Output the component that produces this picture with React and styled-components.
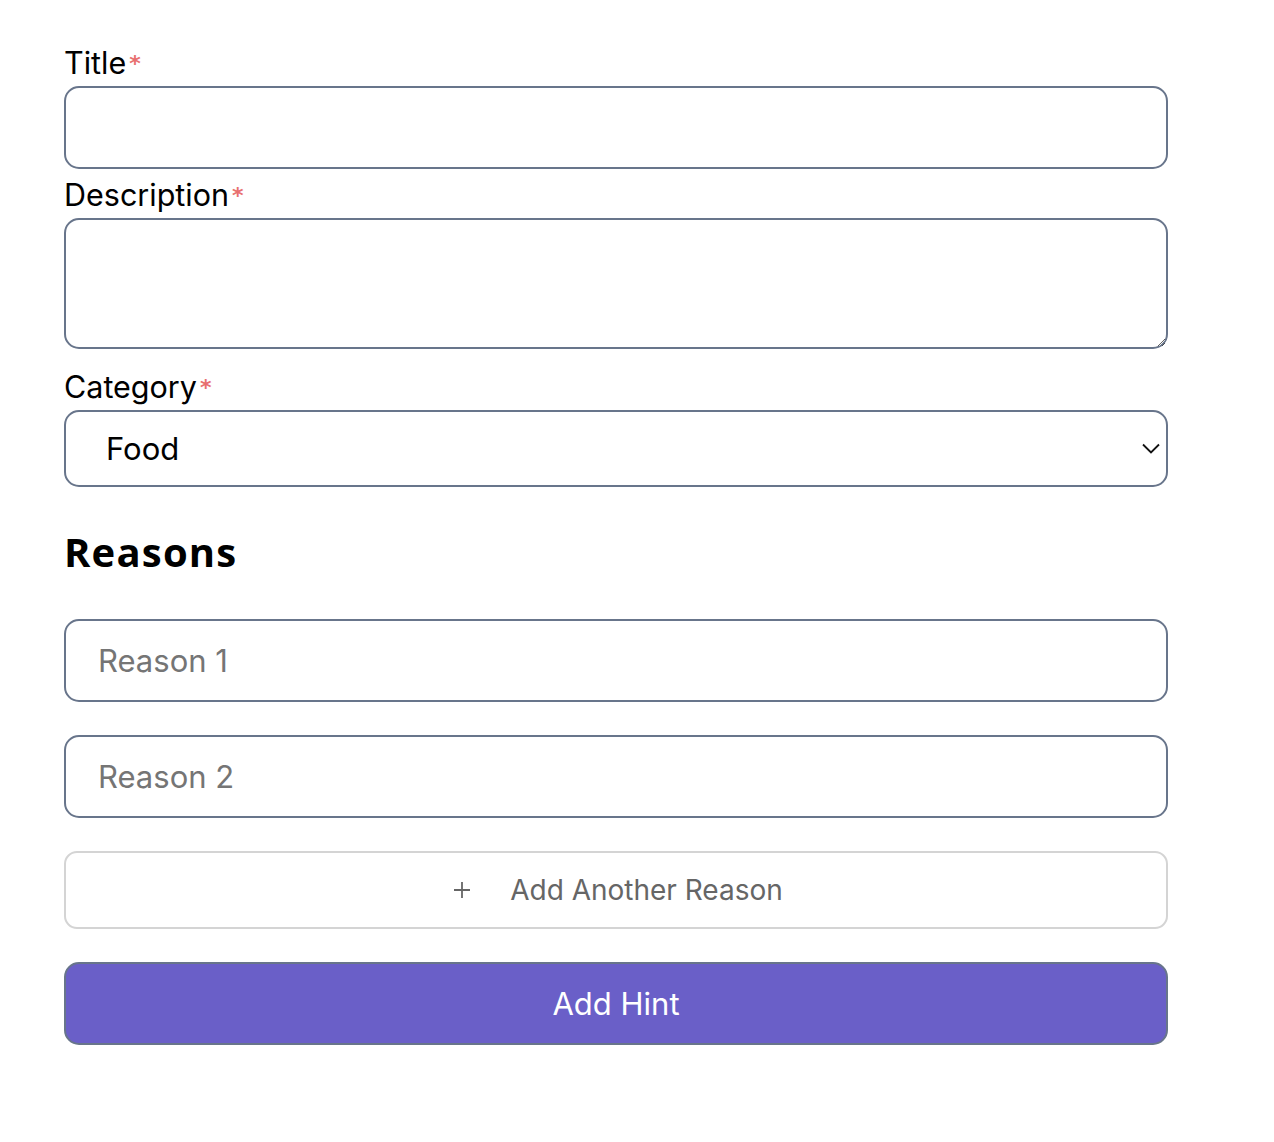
import React from "react";
import styled, { createGlobalStyle } from "styled-components";

const Global = createGlobalStyle`
  html, body { margin: 0; padding: 0; background: #fff; }
  body { font-family: Inter, "Liberation Sans", sans-serif; color: #000; }
  * { box-sizing: border-box; }
`;

const Page = styled.div`
  padding: 45px 0 60px 64px;
`;

const Form = styled.form`
  width: 1104px;
  display: flex;
  flex-direction: column;
`;

const Label = styled.label`
  display: flex;
  align-items: flex-start;
  font-size: 30.5px;
  line-height: 36px;
  height: 36px;
  margin: ${(p) => p.$top || 0}px 0 5px;
  color: #000;
`;

const Star = styled.span`
  color: #e87070;
  font-family: "DejaVu Sans", sans-serif;
  font-weight: 700;
  font-size: 22px;
  line-height: 22px;
  margin-left: 3px;
  margin-top: 8px;
`;

const fieldBase = `
  width: 100%;
  border: 2px solid #68758b;
  border-radius: 15px;
  background: #fff;
  font-family: Inter, "Liberation Sans", sans-serif;
  outline: none;
  display: block;
`;

const TextInput = styled.input`
  ${fieldBase}
  height: 83px;
  padding: 0 32px;
  font-size: 31px;
  color: #000;
  &::placeholder { color: #757575; }
`;

const TextArea = styled.textarea`
  ${fieldBase}
  height: 131px;
  padding: 16px 32px;
  font-size: 31px;
  resize: vertical;
`;

const SelectWrap = styled.div`
  position: relative;
  width: 100%;
`;

const Select = styled.select`
  ${fieldBase}
  appearance: none;
  height: 77px;
  padding: 0 60px 0 40px;
  font-size: 31px;
  color: #000;
`;

const Chevron = styled.svg`
  position: absolute;
  right: 7px;
  top: 31px;
  pointer-events: none;
`;

const Heading = styled.h2`
  font-family: "Open Sans", Lato, sans-serif;
  font-weight: 700;
  font-size: 40px;
  line-height: 48px;
  letter-spacing: 1.2px;
  margin: 41px 0 43px;
`;

const Reasons = styled.div`
  display: flex;
  flex-direction: column;
  gap: 33px;
`;

const AddReason = styled.button`
  width: 100%;
  height: 78px;
  border: 2px solid #d4d4d4;
  border-radius: 13px;
  background: #fff;
  color: #666;
  font-family: Inter, "Liberation Sans", sans-serif;
  font-size: 28px;
  display: flex;
  align-items: center;
  justify-content: center;
  gap: 39px;
  cursor: pointer;
`;

const PlusIcon = styled.svg`
  display: block;
  margin-left: 4px;
`;

const Submit = styled.button`
  width: 100%;
  height: 83px;
  border: 2px solid #68758b;
  border-radius: 15px;
  background: #6a5fc8;
  color: #fff;
  font-family: Inter, "Liberation Sans", sans-serif;
  font-size: 31px;
  cursor: pointer;
`;

function Field({ label, top, children }) {
  return (
    <>
      <Label $top={top}>
        {label}
        <Star>*</Star>
      </Label>
      {children}
    </>
  );
}

export default function App() {
  return (
    <Page>
      <Global />
      <Form onSubmit={(e) => e.preventDefault()}>
        <Field label="Title">
          <TextInput type="text" />
        </Field>
        <Field label="Description" top={8}>
          <TextArea />
        </Field>
        <Field label="Category" top={20}>
          <SelectWrap>
            <Select defaultValue="Food">
              <option>Food</option>
              <option>Travel</option>
              <option>Other</option>
            </Select>
            <Chevron width="20" height="14" viewBox="0 0 20 14">
              <path d="M2 3.5l8 8 8-8" fill="none" stroke="#111" strokeWidth="1.8" />
            </Chevron>
          </SelectWrap>
        </Field>
        <Heading>Reasons</Heading>
        <Reasons>
          <TextInput type="text" placeholder="Reason 1" />
          <TextInput type="text" placeholder="Reason 2" />
          <AddReason type="button">
            <PlusIcon width="18" height="18" viewBox="0 0 18 18">
              <path d="M9 1v16M1 9h16" stroke="#666" strokeWidth="1.8" fill="none" />
            </PlusIcon>
            <span>Add Another Reason</span>
          </AddReason>
          <Submit type="submit">Add Hint</Submit>
        </Reasons>
      </Form>
    </Page>
  );
}
